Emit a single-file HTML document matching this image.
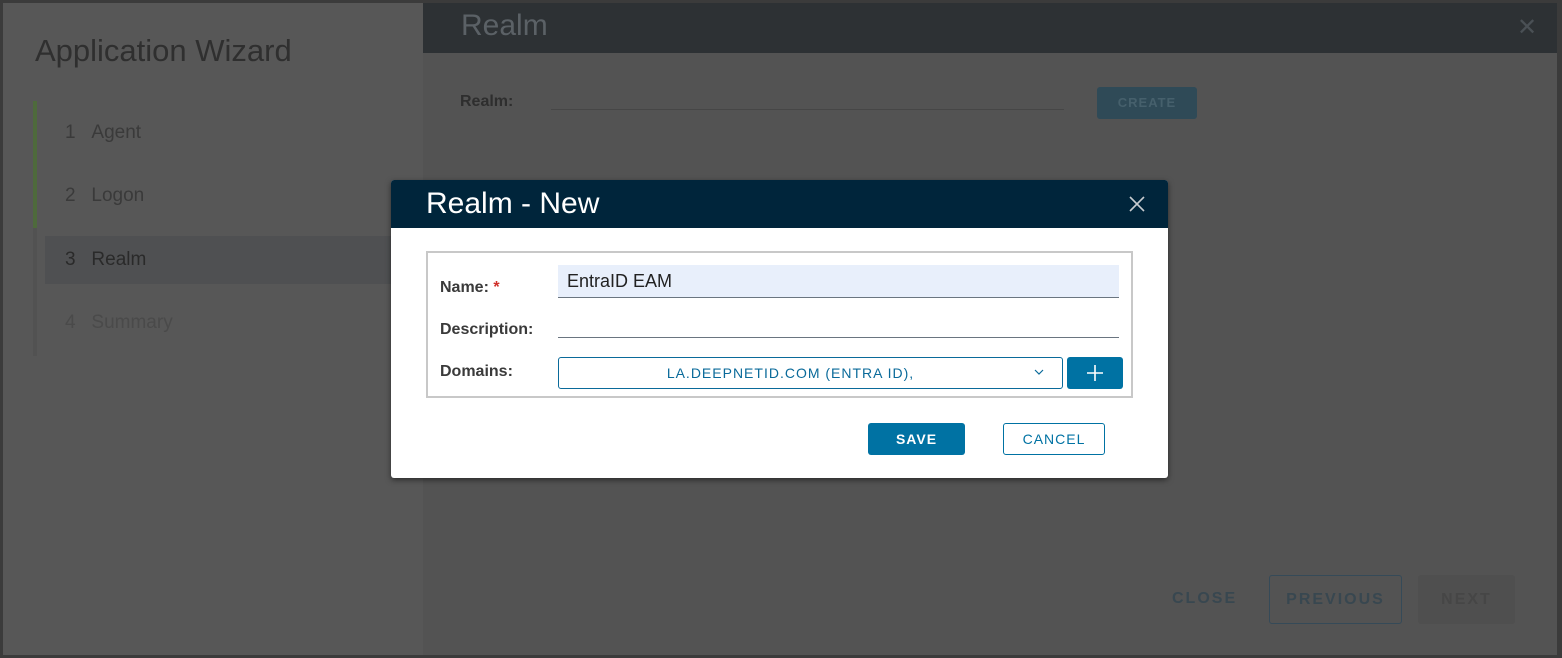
<!DOCTYPE html>
<html><head><style>
*{margin:0;padding:0;box-sizing:border-box}
body{width:1562px;height:658px;background:#3b3b3b;font-family:"Liberation Sans",sans-serif;position:relative;overflow:hidden}
.abs{position:absolute}
</style></head><body>
<div class="abs" style="left:3px;top:3px;width:1554px;height:652px;background:#535353"></div>
<div class="abs" style="left:3px;top:3px;width:420px;height:652px;background:#575757"></div>
<div class="abs" style="left:35px;top:33px;font-size:31px;color:#2f2f2f">Application Wizard</div>
<div class="abs" style="left:33px;top:101px;width:4px;height:127px;background:#4e6a3c"></div>
<div class="abs" style="left:33px;top:228px;width:4px;height:128px;background:#525252"></div>
<div class="abs" style="left:45px;top:236px;width:346px;height:48px;background:#4f5052"></div>
<div class="abs" style="left:65px;top:122px;font-size:19px;color:#3a3a3a">1&nbsp;&nbsp;&nbsp;Agent</div>
<div class="abs" style="left:65px;top:185px;font-size:19px;color:#3a3a3a">2&nbsp;&nbsp;&nbsp;Logon</div>
<div class="abs" style="left:65px;top:249px;font-size:19px;color:#2a2a2a">3&nbsp;&nbsp;&nbsp;Realm</div>
<div class="abs" style="left:65px;top:312px;font-size:19px;color:#4a4a4a">4&nbsp;&nbsp;&nbsp;Summary</div>

<div class="abs" style="left:423px;top:3px;width:1134px;height:50px;background:#2d3134"></div>
<div class="abs" style="left:461px;top:9px;font-size:30px;color:#5b6166">Realm</div>
<div class="abs" style="left:1517px;top:16px;font-size:24px;color:#4a5055;line-height:24px">✕</div>
<div class="abs" style="left:460px;top:93px;font-size:16px;font-weight:bold;color:#2e2e2e">Realm:</div>
<div class="abs" style="left:551px;top:109px;width:513px;height:1px;background:#464646"></div>
<div class="abs" style="left:1097px;top:87px;width:100px;height:32px;background:#2f4a57;border-radius:3px;color:#46606c;font-size:13px;font-weight:bold;letter-spacing:1px;text-align:center;line-height:32px">CREATE</div>
<div class="abs" style="left:1172px;top:590px;font-size:16px;font-weight:bold;letter-spacing:2px;color:#384750">CLOSE</div>
<div class="abs" style="left:1269px;top:575px;width:133px;height:49px;border:1px solid #354a58;border-radius:3px;font-size:16px;font-weight:bold;letter-spacing:2px;color:#384750;text-align:center;line-height:47px">PREVIOUS</div>
<div class="abs" style="left:1418px;top:575px;width:97px;height:49px;background:#4f4f4f;border-radius:3px;font-size:16px;font-weight:bold;letter-spacing:2px;color:#464646;text-align:center;line-height:49px">NEXT</div>

<div class="abs" style="left:391px;top:180px;width:777px;height:298px;background:#fff;border-radius:3px;box-shadow:0 2px 6px rgba(0,0,0,.5);overflow:hidden">
 <div class="abs" style="left:0;top:0;width:777px;height:48px;background:#00253b"></div>
 <div class="abs" style="left:35px;top:7px;font-size:30px;color:#fff">Realm - New</div>
 <svg class="abs" style="left:738px;top:16px" width="16" height="16"><path d="M1 1L15 15M15 1L1 15" stroke="#c8ccd0" stroke-width="1.6"/></svg>
 <div class="abs" style="left:35px;top:71px;width:707px;height:147px;border:2px solid #c8c8c8"></div>
 <div class="abs" style="left:49px;top:99px;font-size:16px;font-weight:bold;color:#3a3a3a">Name: <span style="color:#d0302a">*</span></div>
 <div class="abs" style="left:167px;top:85px;width:561px;height:33px;background:#e8effb;border-bottom:1px solid #6a7580"></div>
 <div class="abs" style="left:176px;top:91px;font-size:18px;color:#222">EntraID EAM</div>
 <div class="abs" style="left:49px;top:141px;font-size:16px;font-weight:bold;color:#3a3a3a">Description:</div>
 <div class="abs" style="left:167px;top:157px;width:561px;height:1px;background:#6a7580"></div>
 <div class="abs" style="left:49px;top:183px;font-size:16px;font-weight:bold;color:#3a3a3a">Domains:</div>
 <div class="abs" style="left:167px;top:177px;width:505px;height:32px;border:1px solid #0a6a9a;border-radius:3px;text-align:center;line-height:30px;font-size:14px;color:#0a6a9a;letter-spacing:1px;padding-right:40px">LA.DEEPNETID.COM (ENTRA ID),</div>
 <svg class="abs" style="left:643px;top:189px" width="10" height="7"><path d="M1 1L5 5L9 1" stroke="#0a6a9a" stroke-width="1.2" fill="none"/></svg>
 <div class="abs" style="left:676px;top:177px;width:56px;height:32px;background:#0072a3;border-radius:3px"></div>
 <svg class="abs" style="left:695px;top:184px" width="18" height="18"><path d="M9 1V17M1 9H17" stroke="#fff" stroke-width="1.6"/></svg>
 <div class="abs" style="left:477px;top:243px;width:97px;height:32px;background:#0072a3;border-radius:3px;color:#fff;font-size:14px;font-weight:bold;letter-spacing:1px;text-align:center;line-height:32px">SAVE</div>
 <div class="abs" style="left:612px;top:243px;width:102px;height:32px;border:1px solid #0072a3;border-radius:3px;color:#0072a3;font-size:14px;letter-spacing:1px;text-align:center;line-height:30px">CANCEL</div>
</div>
</body></html>
